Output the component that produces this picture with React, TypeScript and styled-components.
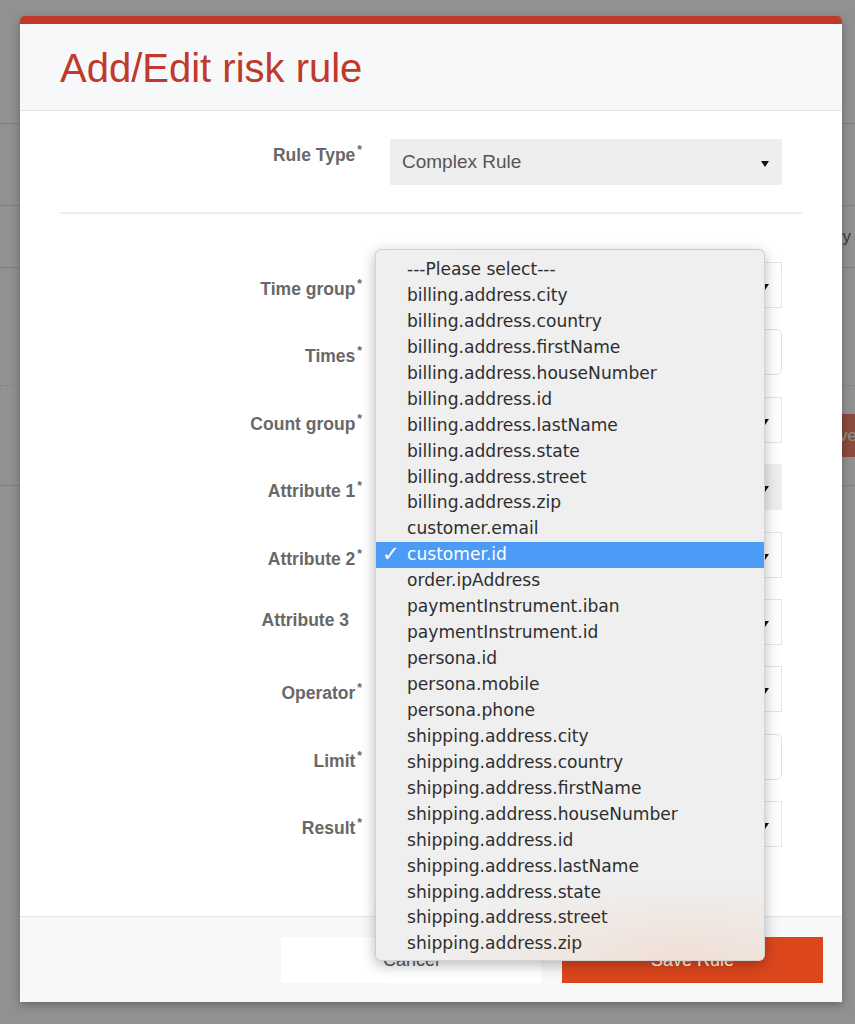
import React from "react";
import styled, {createGlobalStyle} from "styled-components";

const GlobalStyle = createGlobalStyle`
  html, body {
    margin: 0;
    padding: 0;
    background: #ffffff;
    overflow: hidden;
  }
  * {
    box-sizing: border-box;
  }
`;

const sans = `"Liberation Sans", Arial, Helvetica, sans-serif`;
const redColor = '#c0392b';

// ---- page behind the modal ----

const Screen = styled.div`
  position: relative;
  width: 855px;
  height: 1024px;
  overflow: hidden;
  font-family: ${sans};
`;

const BackPage = styled.div`
  display: flex;
  flex-direction: column;
  width: 100%;
`;

const BackBand = styled.div<{ $h: number; $dashed?: boolean }>`
  height: ${p => p.$h}px;
  border-bottom: 1px ${p => (p.$dashed ? 'dashed' : 'solid')} #e2e2e2;
  display: flex;
  align-items: center;
  justify-content: flex-end;
`;

const BackHeading = styled.span`
  font-size: 17px;
  color: #6a6a6a;
  padding-right: 4px;
`;

const BackButton = styled.button`
  height: 43px;
  padding: 0 20px;
  margin-right: -22px;
  border: none;
  background: #f2846a;
  color: #ffffff;
  font-family: ${sans};
  font-size: 17px;
`;

const Overlay = styled.div`
  position: absolute;
  inset: 0;
  background: rgba(0, 0, 0, 0.43);
`;

// ---- modal ----

const Modal = styled.div`
  position: absolute;
  top: 16px;
  left: 20px;
  width: 822px;
  height: 986px;
  display: flex;
  flex-direction: column;
  background: #ffffff;
  border-top: 8px solid ${redColor};
  border-radius: 5px 5px 0 0;
  box-shadow: 0 3px 10px rgba(0, 0, 0, 0.3);
`;

const ModalHeader = styled.div`
  height: 87px;
  background: #f7f8fa;
  border-bottom: 1px solid #e3e4e6;
  padding: 20px 40px 0;
`;

const Title = styled.h2`
  margin: 0;
  font-family: ${sans};
  font-weight: 400;
  font-size: 40px;
  line-height: 48px;
  color: ${redColor};
`;

const ModalBody = styled.div`
  flex: 1;
  padding: 28px 40px 0;
`;

const Divider = styled.hr`
  border: none;
  height: 2px;
  background: #eeeeee;
  margin: 27px 0 48px;
`;

const FieldList = styled.div`
  display: flex;
  flex-direction: column;
  gap: 21.4px;
`;

const FormRow = styled.div`
  display: grid;
  grid-template-columns: 302px 392px;
  column-gap: 28px;
  align-items: start;
`;

const Label = styled.label<{ $required: boolean; $top: number }>`
  text-align: right;
  padding-top: ${p => p.$top}px;
  padding-right: ${p => (p.$required ? 0 : 13)}px;
  font-family: ${sans};
  font-weight: 700;
  font-size: 17.5px;
  color: #686868;
`;

const Star = styled.sup`
  font-size: 12px;
  margin-left: 2px;
`;

const SelectBox = styled.div<{ $muted?: boolean }>`
  position: relative;
  height: 46px;
  display: flex;
  align-items: center;
  padding: 0 11px;
  background: ${p => (p.$muted ? '#eeeeee' : '#ffffff')};
  border: 1px solid ${p => (p.$muted ? '#eeeeee' : '#e4e4e4')};
  font-family: ${sans};
  font-size: 19px;
  color: #555555;

  &::after {
    content: "";
    position: absolute;
    right: 12px;
    top: 21px;
    border-left: 4px solid transparent;
    border-right: 4px solid transparent;
    border-top: 6px solid #111111;
  }
`;

const InputBox = styled.div`
  height: 46px;
  border: 1px solid #e2e2e2;
  border-radius: 5px;
  background: #ffffff;
`;

const ModalFooter = styled.div`
  height: 86px;
  background: #f7f8fa;
  border-top: 1px solid #e3e4e6;
  display: flex;
  justify-content: flex-end;
  gap: 21px;
  padding: 20px 19px 0 0;
`;

const FooterButton = styled.button<{ $primary?: boolean }>`
  width: ${p => (p.$primary ? 261 : 260)}px;
  height: 46px;
  border: none;
  background: ${p => (p.$primary ? '#db461d' : '#ffffff')};
  color: ${p => (p.$primary ? '#ffffff' : '#555555')};
  font-family: ${sans};
  font-size: 18px;
`;

// ---- native select popup ----

const Menu = styled.ul`
  position: absolute;
  left: 355px;
  top: 225px;
  width: 390px;
  height: 712px;
  margin: 0;
  padding: 7px 0 0;
  list-style: none;
  background:
    radial-gradient(ellipse 65% 11% at 80% 100%, rgba(240, 218, 205, 0.75), rgba(240, 218, 205, 0)),
    #efefef;
  border: 1px solid rgba(0, 0, 0, 0.12);
  border-radius: 6px;
  box-shadow: 0 4px 14px rgba(0, 0, 0, 0.28);
  overflow: hidden;
`;

const MenuItem = styled.li<{ $active: boolean }>`
  position: relative;
  height: 25.95px;
  line-height: 25.95px;
  padding-left: 31px;
  font-family: "DejaVu Sans", Verdana, sans-serif;
  font-size: 17.1px;
  color: ${p => (p.$active ? '#ffffff' : '#2e2e2e')};
  background: ${p => (p.$active ? '#4c9bf7' : 'transparent')};
  white-space: nowrap;
`;

const Check = styled.span`
  position: absolute;
  left: 6px;
  top: 0;
  font-size: 21px;
  font-weight: 700;
`;

const options = [
    '---Please select---',
    'billing.address.city',
    'billing.address.country',
    'billing.address.firstName',
    'billing.address.houseNumber',
    'billing.address.id',
    'billing.address.lastName',
    'billing.address.state',
    'billing.address.street',
    'billing.address.zip',
    'customer.email',
    'customer.id',
    'order.ipAddress',
    'paymentInstrument.iban',
    'paymentInstrument.id',
    'persona.id',
    'persona.mobile',
    'persona.phone',
    'shipping.address.city',
    'shipping.address.country',
    'shipping.address.firstName',
    'shipping.address.houseNumber',
    'shipping.address.id',
    'shipping.address.lastName',
    'shipping.address.state',
    'shipping.address.street',
    'shipping.address.zip',
];

type Field = { label: string; kind: 'select' | 'input'; required: boolean; muted?: boolean; value?: string };

const fields: Field[] = [
    {label: 'Time group', kind: 'select', required: true},
    {label: 'Times', kind: 'input', required: true},
    {label: 'Count group', kind: 'select', required: true},
    {label: 'Attribute 1', kind: 'select', required: true, muted: true},
    {label: 'Attribute 2', kind: 'select', required: true, value: 'customer.id'},
    {label: 'Attribute 3', kind: 'select', required: false},
    {label: 'Operator', kind: 'select', required: true},
    {label: 'Limit', kind: 'input', required: true},
    {label: 'Result', kind: 'select', required: true},
];

const FieldLabel = ({text, required, top}: { text: string; required: boolean; top: number }) => (
    <Label $required={required} $top={top}>
        {text}
        {required && <Star>*</Star>}
    </Label>
);

export default function App() {
    const selected = 'customer.id';

    return (
        <Screen>
            <GlobalStyle/>
            <BackPage>
                <BackBand $h={124}/>
                <BackBand $h={82}/>
                <BackBand $h={62}><BackHeading>Category</BackHeading></BackBand>
                <BackBand $h={118} $dashed/>
                <BackBand $h={100}><BackButton>Save</BackButton></BackBand>
            </BackPage>
            <Overlay/>

            <Modal>
                <ModalHeader>
                    <Title>Add/Edit risk rule</Title>
                </ModalHeader>

                <ModalBody>
                    <FormRow>
                        <FieldLabel text="Rule Type" required top={4}/>
                        <SelectBox $muted>Complex Rule</SelectBox>
                    </FormRow>
                    <Divider/>
                    <FieldList>
                        {fields.map((f) => (
                            <FormRow key={f.label}>
                                <FieldLabel text={f.label} required={f.required} top={f.required ? 15 : 11}/>
                                {f.kind === 'select'
                                    ? <SelectBox $muted={f.muted}>{f.value || ''}</SelectBox>
                                    : <InputBox/>}
                            </FormRow>
                        ))}
                    </FieldList>
                </ModalBody>

                <ModalFooter>
                    <FooterButton>Cancel</FooterButton>
                    <FooterButton $primary>Save Rule</FooterButton>
                </ModalFooter>

                <Menu>
                    {options.map((o) => (
                        <MenuItem key={o} $active={o === selected}>
                            {o === selected && <Check>✓</Check>}
                            {o}
                        </MenuItem>
                    ))}
                </Menu>
            </Modal>
        </Screen>
    );
}
